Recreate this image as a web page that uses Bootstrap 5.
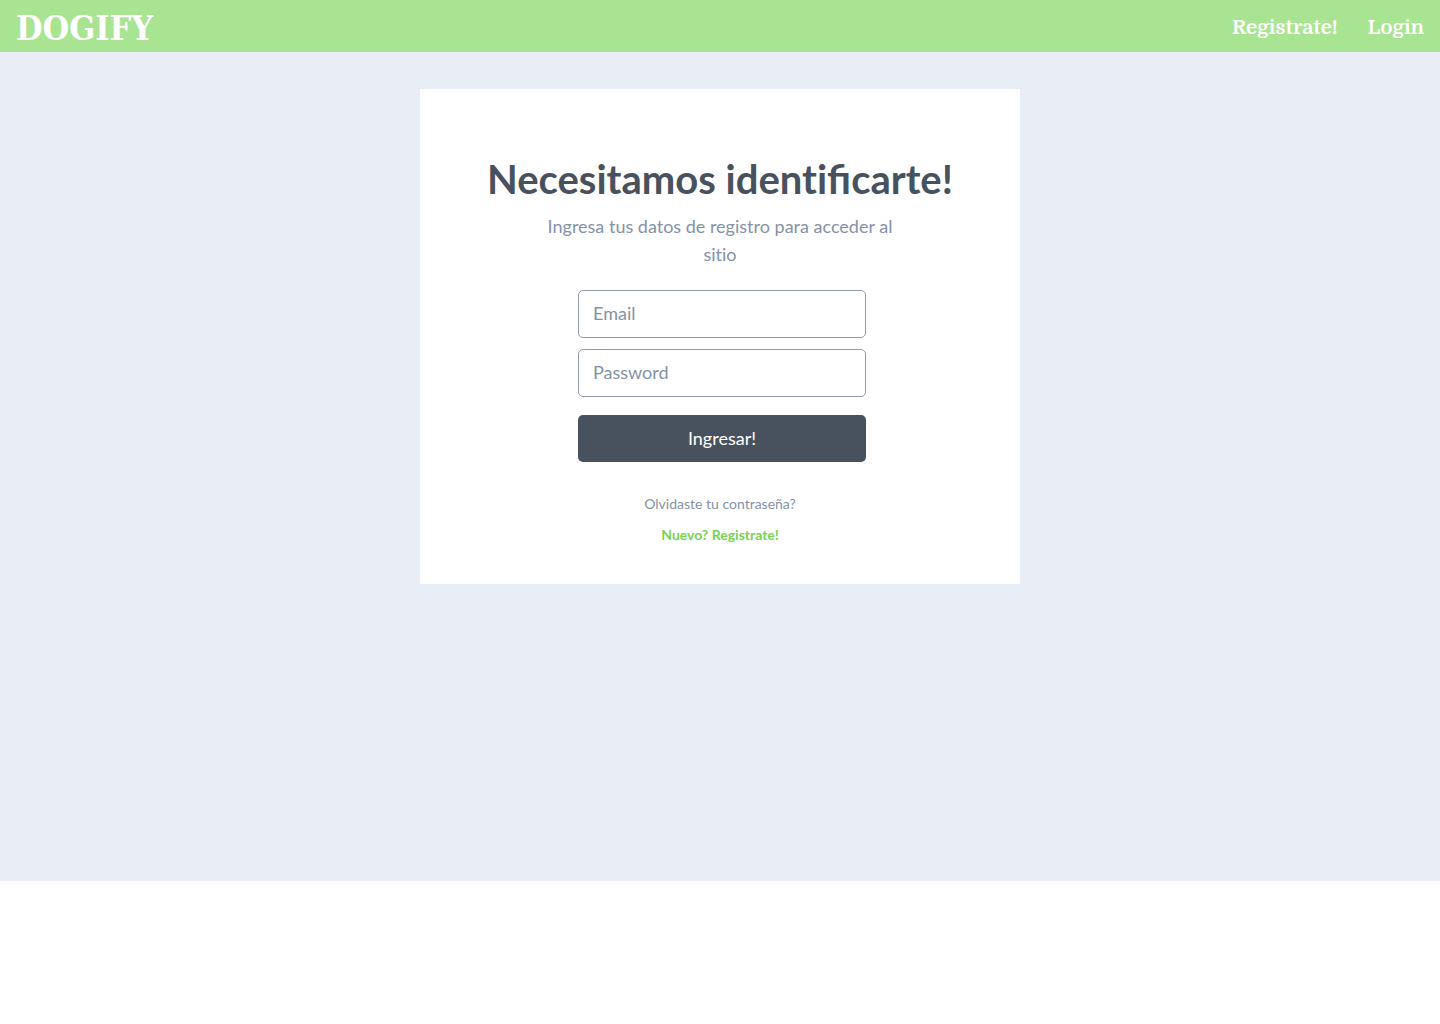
<!DOCTYPE html>
<html lang="es">
<head>
<meta charset="utf-8">
<meta name="viewport" content="width=device-width, initial-scale=1">
<title>Dogify</title>
<link href="https://cdn.jsdelivr.net/npm/bootstrap@5.3.0/dist/css/bootstrap.min.css" rel="stylesheet">
<style>
body { font-family: Lato, sans-serif; background: #fff; }
.page { min-height: 86vh; background: #e9edf5; }
.topbar { background: #a9e492; height: 52px; }
.brand { font: bold 34px/48px "Roboto Slab", "DejaVu Serif Condensed", "DejaVu Serif", serif; }
.menu { gap: 30px; font: bold 20px/48px Domine, "Liberation Serif", serif; }
.panel { max-width: 600px; margin-top: 37px; padding: 64px 32px 39px; }
.title { font-size: 40px; line-height: 52px; font-weight: 700; color: #48525e; }
.plain { font-variant-ligatures: none; }
.intro { max-width: 348px; margin-top: 7px; font-size: 18px; line-height: 28px; color: #8492a9; }
.login { max-width: 292px; margin-top: 22px; padding-left: 4px; }
.field { height: 48px; padding: 0 14px 2px; font-size: 18px; border: 1px solid #8e9bb3; border-radius: 5px; margin-bottom: 11px; }
.field::placeholder { color: #8492a6; }
.submit { height: 47px; margin-top: 7px; padding: 0 12px 2px; font-size: 18px; line-height: 28px; border-radius: 5px; color: #fff; background: #48525e; border: 0; }
.submit:hover { color: #fff; background: #38414b; }
.links { font-size: 14px; line-height: 21px; gap: 10px; margin-top: 31px; }
.forgot { color: #8492a6; }
.signup { color: #77d353; }
</style>
</head>
<body>
<div class="page pb-4">
  <header class="topbar d-flex justify-content-between align-items-center px-3 pt-1">
    <a class="brand text-white text-decoration-none" href="#">DOGIFY</a>
    <nav class="menu d-flex" aria-label="Principal">
      <a class="text-white text-decoration-none" href="#">Registrate!</a>
      <a class="text-white text-decoration-none" href="#">Login</a>
    </nav>
  </header>
  <main class="panel bg-white mx-auto text-center">
    <h1 class="title mb-0"><span class="plain">Necesitamos ident</span>ificarte!</h1>
    <p class="intro plain mx-auto mb-0">Ingresa tus datos de registro para acceder al sitio</p>
    <form class="login mx-auto">
      <input class="form-control field" id="email" type="email" placeholder="Email" aria-label="Email">
      <input class="form-control field" id="password" type="password" placeholder="Password" aria-label="Password">
      <button class="btn submit w-100" type="submit">Ingresar!</button>
    </form>
    <div class="links d-flex flex-column align-items-center">
      <a class="forgot text-decoration-none" href="#">Olvidaste tu contraseña?</a>
      <a class="signup fw-bold text-decoration-none" href="#">Nuevo? Registrate!</a>
    </div>
  </main>
</div>
<script src="https://cdn.jsdelivr.net/npm/bootstrap@5.3.0/dist/js/bootstrap.bundle.min.js"></script>
</body>
</html>
